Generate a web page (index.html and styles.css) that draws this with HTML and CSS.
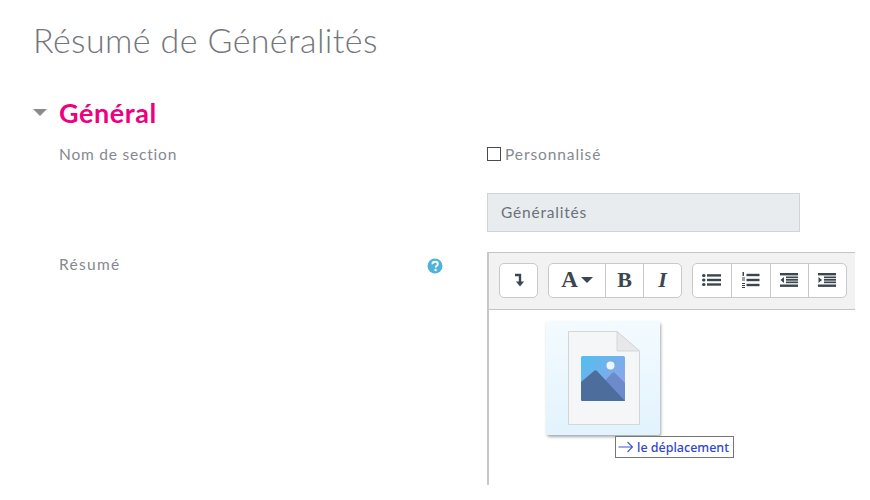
FILE: index.html
```html
<!DOCTYPE html>
<html lang="fr">
<head>
<meta charset="utf-8">
<title>Résumé de Généralités</title>
<link rel="stylesheet" href="styles.css">
</head>
<body>
<main class="page">
  <h1 class="title">Résumé de Généralités</h1>
  <h2 class="section"><span class="caret"></span>Général</h2>
  <div class="row row-name">
    <div class="label">Nom de section</div>
    <div class="field">
      <label class="check"><span class="box"></span>Personnalisé</label>
      <div class="input">Généralités</div>
    </div>
  </div>
  <div class="row row-summary">
    <div class="label label-help"><span class="label-text">Résumé</span>
      <svg class="help" viewBox="0 0 16 16" width="16" height="16"><circle cx="8" cy="8" r="7.5" fill="#4fb3d9"/><path d="M5.300 6.200C5.400 4.600 6.500 3.700 8.100 3.700c1.600 0 2.700 1 2.700 2.300 0 1.100-.6 1.600-1.300 2.100-.6.4-.8.7-.8 1.300" fill="none" stroke="#fff" stroke-width="1.900"/><circle cx="8.600" cy="12" r="1.200" fill="#fff"/></svg>
    </div>
    <div class="editor">
      <div class="toolbar">
        <div class="group">
          <span class="btn btn-first"><svg viewBox="0 0 12 14" width="12" height="14"><path d="M2 2h5v7" fill="none" stroke="#3c4650" stroke-width="2.400"/><path d="M3 8.500h8L7 13.500z" fill="#3c4650"/></svg></span>
        </div>
        <div class="group">
          <span class="btn btn-font"><span class="glyph glyph-a">A</span><span class="drop"></span></span>
          <span class="btn"><span class="glyph">B</span></span>
          <span class="btn"><span class="glyph glyph-i">I</span></span>
        </div>
        <div class="group">
          <span class="btn"><svg viewBox="0 0 20 14" width="20" height="14"><g fill="#3c4650"><rect y="1" width="3.500" height="3" rx="1.500"/><rect y="5.500" width="3.500" height="3" rx="1.500"/><rect y="10" width="3.500" height="3" rx="1.500"/><rect x="5" y="1.200" width="14" height="2.400"/><rect x="5" y="5.800" width="14" height="2.400"/><rect x="5" y="10.300" width="14" height="2.400"/></g></svg></span>
          <span class="btn"><svg viewBox="0 0 20 16" width="20" height="16"><g fill="#3c4650"><rect x="1.500" y="0" width="1.500" height="4"/><rect x="1" y="5.500" width="3" height="1"/><rect x="1" y="7.500" width="3" height="1"/><rect x="1" y="11" width="3" height="1"/><rect x="1" y="13" width="3" height="1"/><rect x="1" y="15" width="3" height="1"/><rect x="5.500" y="1.800" width="13" height="2.400"/><rect x="5.500" y="6.800" width="13" height="2.400"/><rect x="5.500" y="11.800" width="13" height="2.400"/></g></svg></span>
          <span class="btn"><svg viewBox="0 0 20 14" width="20" height="14"><g fill="#3c4650"><rect x="1" y="0" width="18" height="2.400"/><rect x="7" y="3.500" width="12" height="1.700"/><rect x="7" y="6" width="12" height="1.700"/><rect x="7" y="8.500" width="12" height="1.700"/><rect x="1" y="11.500" width="18" height="2.400"/><path d="M5 4v6L1.500 7z"/></g></svg></span>
          <span class="btn"><svg viewBox="0 0 20 14" width="20" height="14"><g fill="#3c4650"><rect x="1" y="0" width="18" height="2.400"/><rect x="7" y="3.500" width="12" height="1.700"/><rect x="7" y="6" width="12" height="1.700"/><rect x="7" y="8.500" width="12" height="1.700"/><rect x="1" y="11.500" width="18" height="2.400"/><path d="M1.500 4v6L5 7z"/></g></svg></span>
        </div>
      </div>
      <div class="content">
        <div class="thumb">
          <svg class="file" viewBox="0 0 72 94" width="72" height="94">
            <path d="M.5.500H49L71.500 20v73.500H.5z" fill="#f4f6f8" stroke="#d4d6d8"/>
            <path d="M49 .5V20h22.500z" fill="#e6e8ea" stroke="#d4d6d8"/>
            <defs><linearGradient id="sky" x1="0" y1="0" x2="1" y2="1"><stop offset="0" stop-color="#4fc0ee"/><stop offset="1" stop-color="#a29ce8"/></linearGradient></defs>
            <rect x="13" y="25" width="44" height="45" rx="1.500" fill="url(#sky)"/>
            <circle cx="42.500" cy="34.500" r="4" fill="#eef6fb"/>
            <path d="M32 55l12-13c1-1 2-1 3 0l10 10v18H40z" fill="#6d8acb"/>
            <path d="M13 51l13-11c1-1 2-1 3 0l28 30H14.500a1.500 1.500 0 0 1-1.500-1.500z" fill="#4d6d9c"/>
          </svg>
        </div>
        <div class="tip"><svg viewBox="0 0 16 12" width="16" height="12"><path d="M.5 6h14M9.500 1l5 5-5 5" fill="none" stroke="#3f55d8" stroke-width="1.100"/></svg><span>le déplacement</span></div>
      </div>
    </div>
  </div>
</main>
</body>
</html>
```
FILE: styles.css
```css
* { box-sizing: border-box; }
html, body { margin: 0; padding: 0; background: #fff; }
body { width: 870px; height: 500px; overflow: hidden; font-family: "Lato", "Liberation Sans", sans-serif; color: #858990; }
.page { padding: 20px 15px 0 33px; }
.title { margin: 0; font-size: 34px; line-height: 40px; font-weight: 300; letter-spacing: 0.4px; color: #73767a; }
.section { margin: 33px 0 0; display: flex; align-items: center; gap: 12px; font-size: 27px; line-height: 40px; height: 40px; font-weight: 700; letter-spacing: 0.55px; color: #ee007f; }
.caret { width: 0; height: 0; border-left: 7px solid transparent; border-right: 7px solid transparent; border-top: 7px solid #8b8b8b; margin-bottom: 2px; }
.row { display: grid; grid-template-columns: 454px 1fr; }
.label { font-size: 15.500px; line-height: 22px; padding-left: 26px; letter-spacing: 0.8px; }
.label-text { letter-spacing: 1.300px; }
.row-name { margin-top: 10px; }
.check { display: flex; align-items: center; font-size: 15.500px; line-height: 22px; letter-spacing: 0.9px; }
.box { width: 14px; height: 14px; border: 1px solid #4a4a4a; margin-right: 4px; background: #fff; }
.input { margin-top: 28px; width: 313px; height: 39px; background: #e9ecef; border: 1px solid #ced4da; padding: 0 0 2px 13px; display: flex; align-items: center; font-size: 15.500px; letter-spacing: 0.8px; color: #6b7178; }
.row-summary { margin-top: 20px; }
.label-help { display: flex; justify-content: space-between; padding-right: 44px; padding-top: 1px; align-items: flex-start; }
.help { margin-top: 5px; }
.editor { border-left: 2px solid #c8c8c8; height: 233px; }
.toolbar { height: 58px; background: #f2f2f2; border-top: 1px solid #c4c4c4; border-bottom: 1px solid #c4c4c4; display: flex; align-items: center; padding: 0 0 2px 10px; gap: 10px; }
.group { display: flex; background: #fff; border: 1px solid #c9c9c9; border-radius: 5px; height: 35px; }
.btn { width: 38.250px; display: flex; align-items: center; justify-content: center; border-left: 1px solid #c9c9c9; }
.btn:first-child { border-left: 0; }
.btn-font { width: 56px; gap: 3px; }
.btn-first { width: 37px; }
.group:nth-child(2) .btn:not(.btn-font) { width: 38px; }
.glyph { font-family: "Liberation Serif", serif; font-weight: 700; font-size: 22px; color: #3c4650; }
.glyph-a { font-size: 23px; }
.glyph-i { font-style: italic; }
.drop { border-left: 6px solid transparent; border-right: 6px solid transparent; border-top: 6px solid #3c4650; width: 0; height: 0; }
.content { position: relative; height: 174px; background: #fff; }
.thumb { position: absolute; left: 57px; top: 11px; width: 114px; height: 114px; border-radius: 3px; background: linear-gradient(180deg, #f4fbff 0%, #e2f3fd 100%); box-shadow: 1px 2px 3px rgba(90, 100, 110, 0.55); display: flex; align-items: flex-start; justify-content: center; padding-top: 10px; }
.file { display: block; margin-left: 1px; }
.tip { position: absolute; left: 126px; top: 126px; width: 119px; height: 22px; background: #fff; border: 1px solid #767676; display: flex; align-items: center; gap: 3px; padding-left: 2px; font-family: "Noto Sans", "Liberation Sans", sans-serif; font-size: 12.500px; font-weight: 500; color: #2f46cf; }
```
